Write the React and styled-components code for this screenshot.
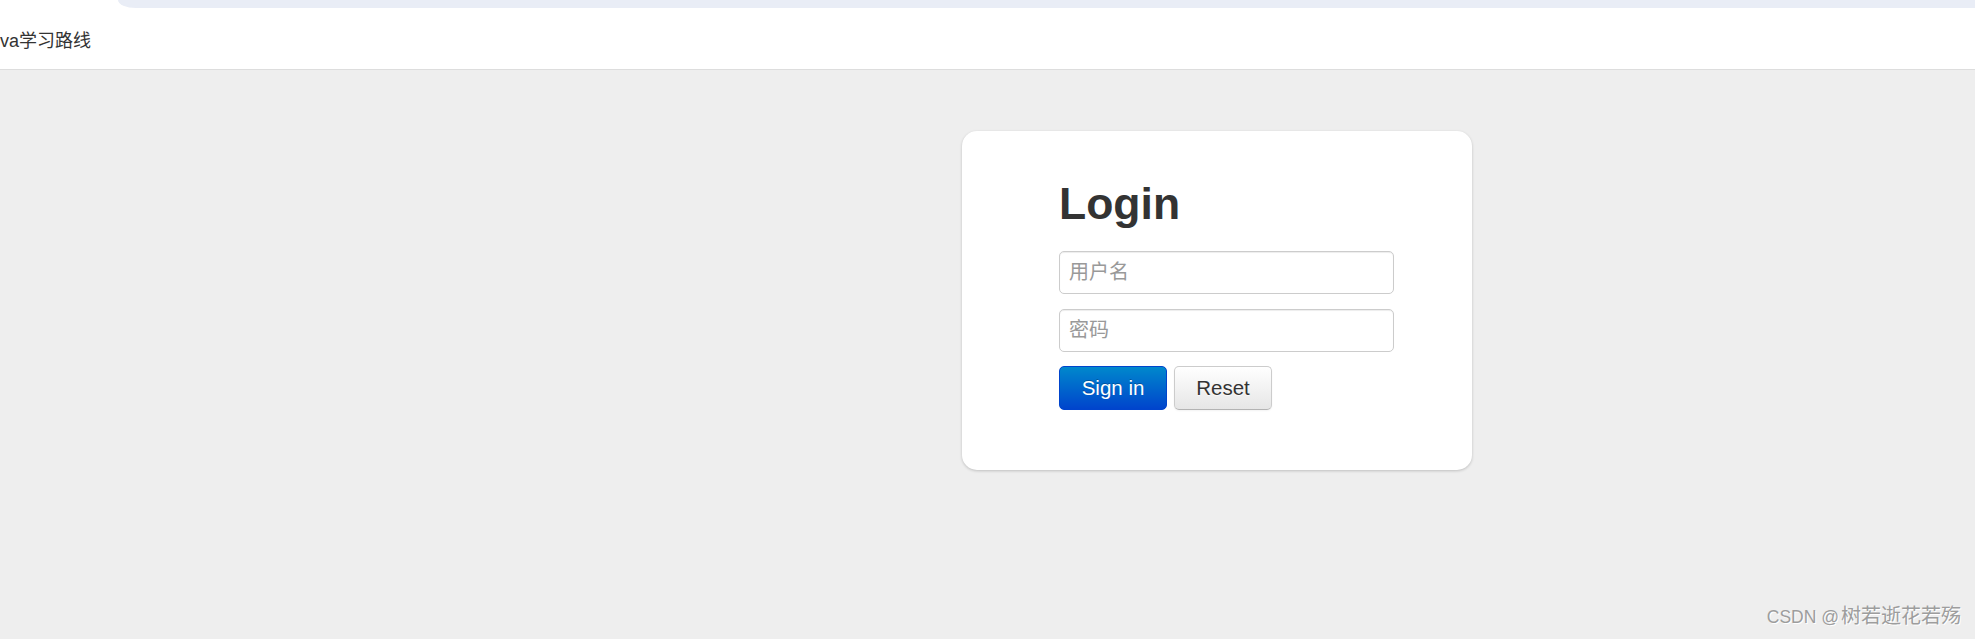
import React from "react";
import styled, { createGlobalStyle } from "styled-components";

const GlobalStyle = createGlobalStyle`
html, body {
    margin: 0;
    padding: 0;
    background: #eeeeee;
    font-family: "Liberation Sans", "Noto Sans CJK SC", sans-serif;
    overflow: hidden;
}
`;

const Page = styled.div`
position: relative;
width: 1975px;
height: 639px;
background: #eeeeee;
`;

const TopBar = styled.div`
height: 69px;
background: #ffffff;
border-bottom: 1px solid #dddddd;
display: flex;
flex-direction: column;
`;

const AddressStrip = styled.div`
height: 8px;
margin-left: 118px;
background: #e9edf6;
border-bottom-left-radius: 18px 8px;
`;

const Bookmarks = styled.div`
flex: 1;
display: flex;
align-items: center;
font-size: 18px;
color: #333333;
font-family: "Liberation Sans", "Noto Sans CJK SC", sans-serif;
`;

const Main = styled.div`
display: flex;
padding: 61px 0 0 962px;
`;

const Card = styled.div`
width: 510px;
box-sizing: border-box;
padding: 48px 78px 60px 97px;
background: #ffffff;
border-radius: 15px;
box-shadow: 0 1px 3px rgba(0, 0, 0, 0.2);
display: flex;
flex-direction: column;
`;

const Title = styled.h2`
margin: 0 0 22px 0;
font-size: 44.5px;
line-height: 50px;
font-weight: 700;
color: #333333;
font-family: "Liberation Sans", sans-serif;
`;

const Input = styled.input`
box-sizing: border-box;
width: 335px;
height: 43px;
margin-bottom: ${({last}) => last ? "14px" : "15px"};
padding: 0 9px;
border: 1px solid #cccccc;
border-radius: 5px;
box-shadow: inset 0 1px 1px rgba(0, 0, 0, 0.075);
font-size: 20px;
font-family: "Liberation Sans", "Noto Sans CJK SC", sans-serif;
color: #555555;
outline: none;
&::placeholder {
    color: #999999;
}
`;

const ButtonRow = styled.div`
display: flex;
gap: 7px;
`;

const Button = styled.button`
box-sizing: border-box;
height: 44px;
width: ${({w}) => w}px;
padding: 0;
border-radius: 5px;
font-size: 20.5px;
font-family: "Liberation Sans", sans-serif;
cursor: pointer;
${({primary}) => primary
    ? `
    color: #ffffff;
    border: 1px solid #0044cc;
    background: linear-gradient(to bottom, #0088cc, #0044cc);
    text-shadow: 0 -1px 0 rgba(0,0,0,0.25);
    `
    : `
    color: #333333;
    border: 1px solid #cccccc;
    border-bottom-color: #b3b3b3;
    background: linear-gradient(to bottom, #ffffff, #e6e6e6);
    text-shadow: 0 1px 1px rgba(255,255,255,0.75);
    box-shadow: inset 0 1px 0 rgba(255,255,255,0.2), 0 1px 2px rgba(0,0,0,0.05);
    `}
`;

const Watermark = styled.div`
position: absolute;
right: 14px;
bottom: 10px;
color: #9d9d9d;
text-shadow: 1px 1px 0 #ffffff;
display: flex;
align-items: baseline;
white-space: nowrap;
`;

const MarkLatin = styled.span`
font-size: 17.5px;
font-family: "Liberation Sans", sans-serif;
margin-right: 2px;
`;

const MarkCjk = styled.span`
font-size: 20px;
font-family: "Noto Sans CJK SC", sans-serif;
`;

const App = () => {
    return (
        <Page>
            <GlobalStyle />
            <TopBar>
                <AddressStrip />
                <Bookmarks>va学习路线</Bookmarks>
            </TopBar>
            <Main>
                <Card>
                    <Title>Login</Title>
                    <Input type="text" placeholder="用户名" />
                    <Input type="password" placeholder="密码" last />
                    <ButtonRow>
                        <Button primary w={108}>Sign in</Button>
                        <Button w={98}>Reset</Button>
                    </ButtonRow>
                </Card>
            </Main>
            <Watermark>
                <MarkLatin>CSDN @</MarkLatin>
                <MarkCjk>树若逝花若殇</MarkCjk>
            </Watermark>
        </Page>
    );
};

export default App;
